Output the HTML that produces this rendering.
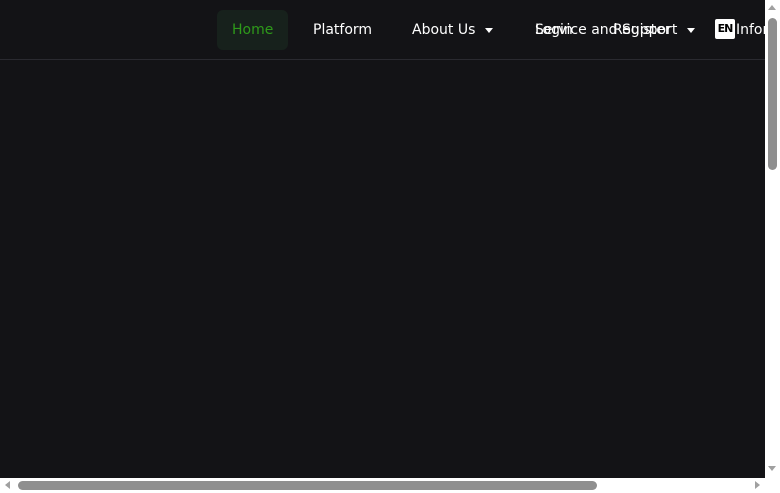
<!DOCTYPE html>
<html><head><meta charset="utf-8">
<style>
html,body{margin:0;padding:0;}
body{width:780px;height:493px;background:#fff;position:relative;overflow:hidden;font-family:"DejaVu Sans","Liberation Sans",sans-serif;font-size:14px;color:#fff;}
.main{position:absolute;left:0;top:0;width:765px;height:478px;background:#131316;overflow:hidden;}
.hdr{position:absolute;left:0;top:0;width:765px;height:59px;border-bottom:1px solid #2a2a30;}
.t{position:absolute;top:21px;line-height:18px;white-space:nowrap;}
.home{position:absolute;left:217px;top:10px;width:71px;height:40px;background:#17211c;border-radius:6px;}
.car{display:inline-block;width:0;height:0;border-left:4px solid transparent;border-right:4px solid transparent;border-top:5px solid #fff;vertical-align:middle;margin-left:10px;}
.en{position:absolute;left:715px;top:19px;width:20px;height:20px;background:#fff;border-radius:2px;color:#000;font-size:11px;font-weight:bold;line-height:20px;text-align:center;letter-spacing:-1px;}
.vth{position:absolute;left:768px;top:18px;width:9px;height:152px;background:#8f8f8f;border-radius:5px;}
.hth{position:absolute;left:18px;top:481px;width:579px;height:9px;background:#8f8f8f;border-radius:5px;}
.tri{position:absolute;width:0;height:0;}
</style></head><body>
<div class="main">
<div class="hdr"></div>
<div class="home"></div>
<div class="t" style="left:232px;color:#2e9a1a">Home</div>
<div class="t" style="left:313px">Platform</div>
<div class="t" style="left:412px">About Us<span class="car"></span></div>
<div class="t" style="left:535px">Service and Support<span class="car"></span></div>
<div class="t" style="left:535px">Login</div>
<div class="t" style="left:613px">Register</div>
<div class="en">EN</div>
<div class="t" style="left:736px">Information</div>
</div>
<div class="vth"></div>
<div class="hth"></div>
<div class="tri" style="left:768px;top:5px;border-left:4px solid transparent;border-right:4px solid transparent;border-bottom:5px solid #a0a0a0"></div>
<div class="tri" style="left:768px;top:466px;border-left:4px solid transparent;border-right:4px solid transparent;border-top:5px solid #a0a0a0"></div>
<div class="tri" style="left:5px;top:481px;border-top:4px solid transparent;border-bottom:4px solid transparent;border-right:5px solid #a0a0a0"></div>
<div class="tri" style="left:755px;top:481px;border-top:4px solid transparent;border-bottom:4px solid transparent;border-left:5px solid #a0a0a0"></div>
</body></html>
